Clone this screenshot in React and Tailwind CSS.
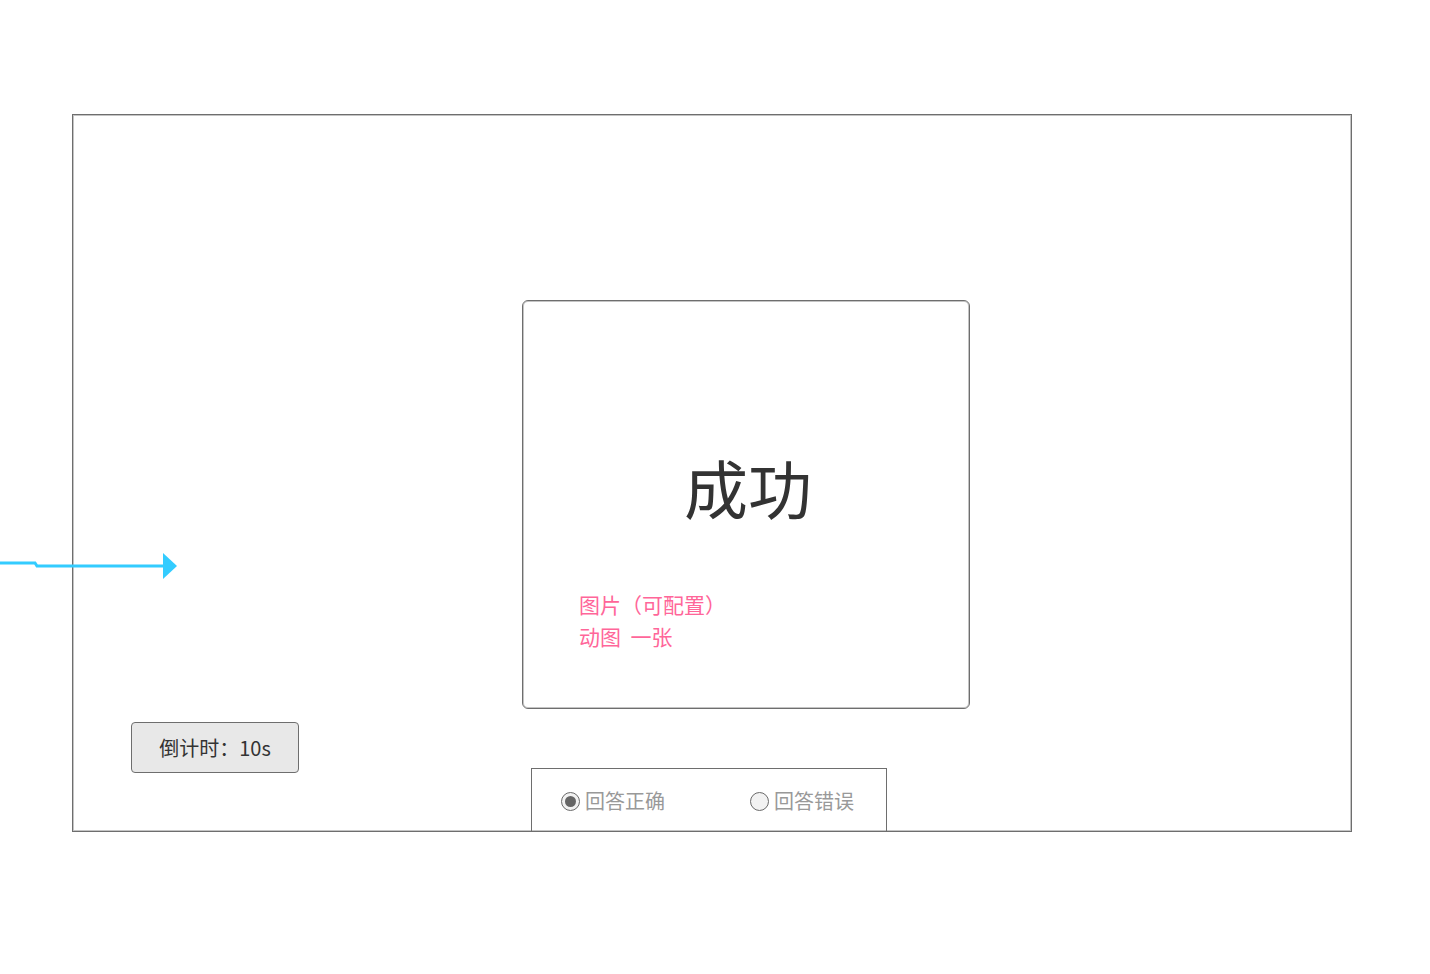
import React from "react";

const cjk = { fontFamily: '"Noto Sans CJK SC", "Noto Sans", sans-serif' };

function Radio({ checked, label }) {
  return (
    <div className="flex items-center">
      <span className="w-[19px] h-[19px] rounded-full border border-[#6a6a6a] bg-[#f2f2f2] flex items-center justify-center box-border">
        {checked && <span className="w-[11px] h-[11px] rounded-full bg-[#666666]" />}
      </span>
      <span className="ml-[5px] text-[20px] leading-[28px] text-[#999999]">{label}</span>
    </div>
  );
}

export default function App() {
  return (
    <div className="relative w-[1430px] h-[974px] bg-white overflow-hidden" style={cjk}>
      <div className="pt-[114px] pl-[72px]">
        <div className="box-border w-[1280px] h-[718px] border border-[#6e6e6e] shadow-[inset_0_0_0_1px_#c4c4c4] flex flex-col">
          <div className="ml-[449px] mt-[185px] box-border w-[448px] h-[409px] border border-[#6e6e6e] shadow-[inset_0_0_0_1px_#c4c4c4] rounded-[6px] flex flex-col">
            <div className="pt-[145px] text-[64px] leading-[80px] text-center text-[#333333] pl-[4px]">成功</div>
            <div className="mt-[62px] pl-[56px] text-[21px] leading-[32px] text-[#ff6699]">
              <div>图片（可配置）</div>
              <div>动图&nbsp;&nbsp;一张</div>
            </div>
          </div>
          <div className="flex items-start mt-[13px]">
            <div className="ml-[58px] box-border w-[168px] h-[51px] border border-[#6e6e6e] rounded-[4px] bg-[#e8e8e8] flex items-center justify-center text-[20px] text-[#333333]">
              倒计时：10s
            </div>
            <div className="ml-[232px] mt-[46px] box-border w-[356px] h-[63px] border-t border-l border-r border-[#6e6e6e] flex items-center pl-[29px] pt-[2px]">
              <Radio checked label="回答正确" />
              <div className="ml-[85px]">
                <Radio label="回答错误" />
              </div>
            </div>
          </div>
        </div>
      </div>
      <svg className="absolute left-0 top-[550px]" width="180" height="32" viewBox="0 550 180 32">
        <polyline points="0,563 35,563 37,566 165,566" fill="none" stroke="#33ccff" strokeWidth="3" />
        <polygon points="163,553 177,566 163,579" fill="#33ccff" />
      </svg>
    </div>
  );
}
